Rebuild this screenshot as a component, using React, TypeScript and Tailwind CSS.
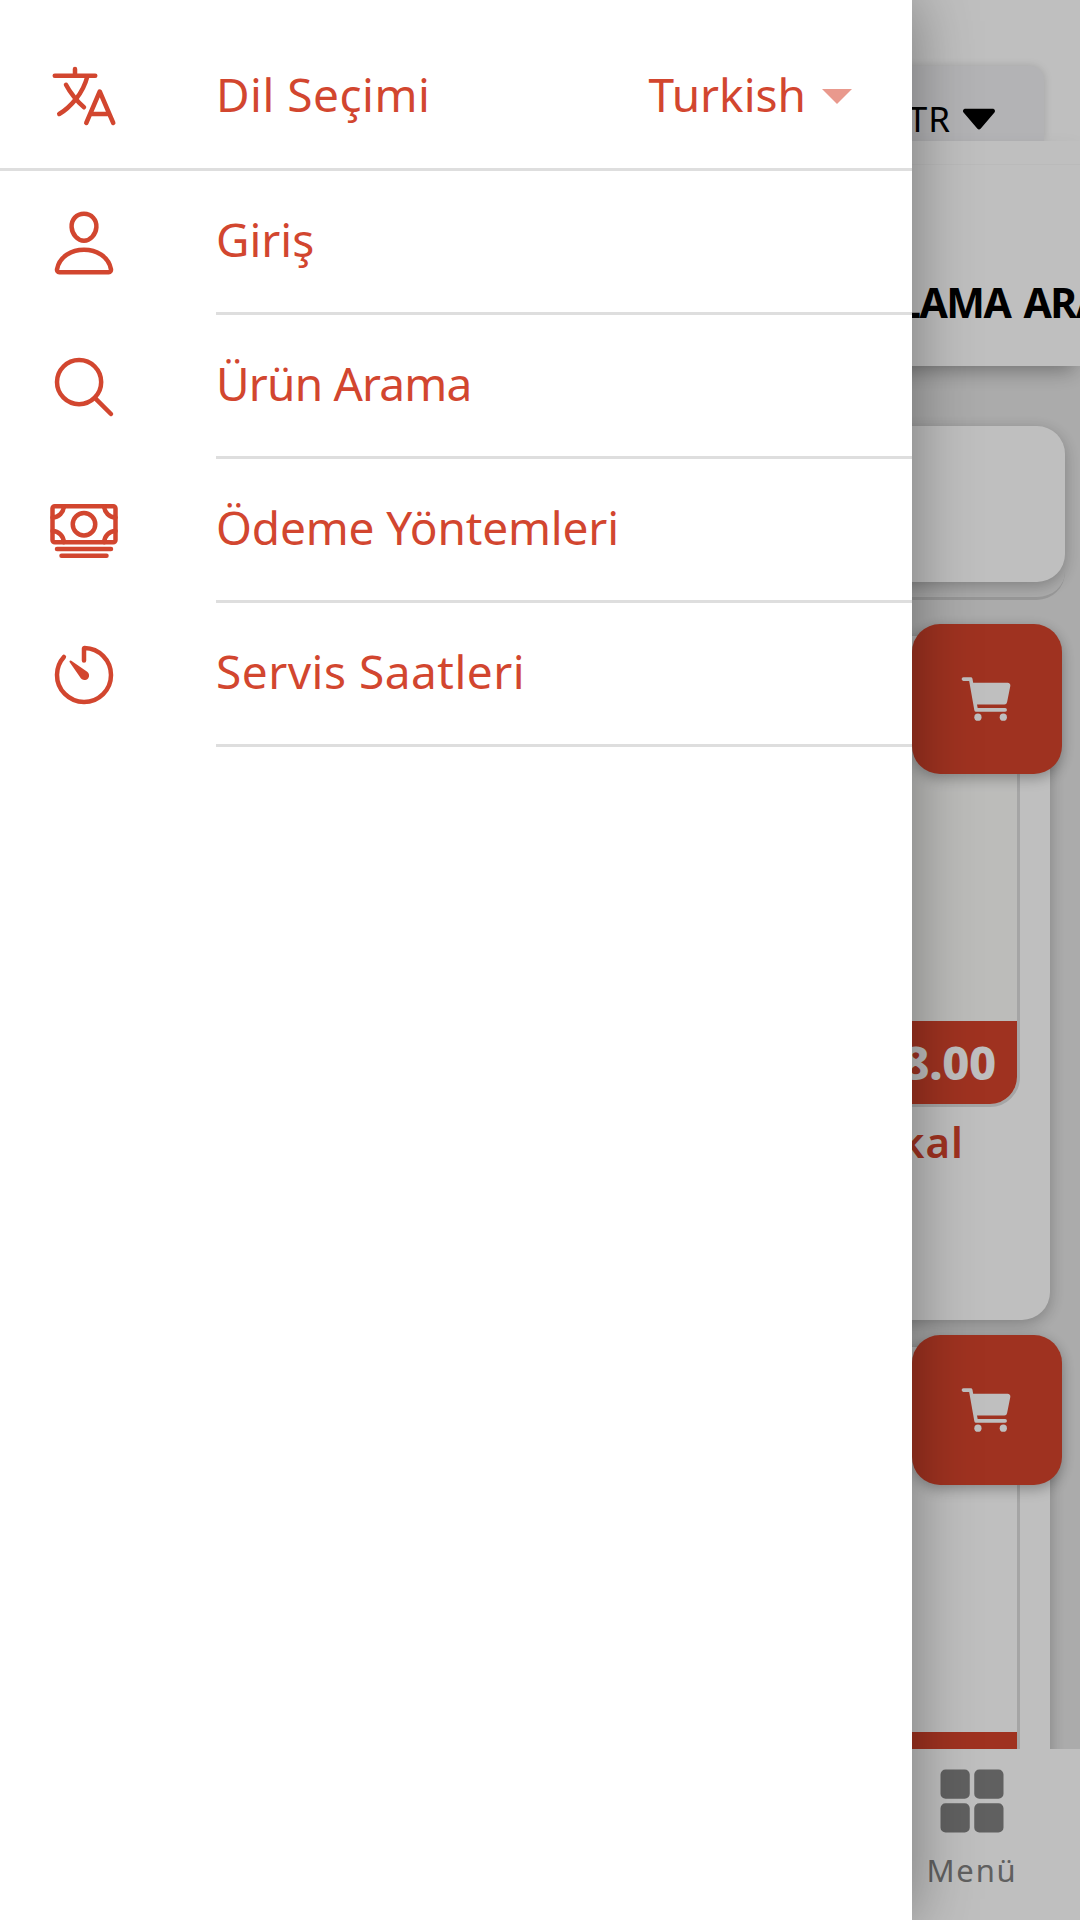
import type { ReactNode } from "react";
import {
    IoCaretDown,
    IoCart,
    IoCashOutline,
    IoGrid,
    IoLanguageOutline,
    IoPersonOutline,
    IoSearchOutline,
    IoTimerOutline,
} from "react-icons/io5";

type MenuRowProps = {
    icon: ReactNode;
    label: string;
    tracking: string;
};

type ProductCardProps = {
    name?: string;
    price?: string;
    imageClass: string;
};

const menuRows: MenuRowProps[] = [
    { icon: <IoPersonOutline />, label: "Giriş", tracking: "tracking-[0px]" },
    { icon: <IoSearchOutline />, label: "Ürün Arama", tracking: "tracking-[-0.8px]" },
    { icon: <IoCashOutline />, label: "Ödeme Yöntemleri", tracking: "tracking-[-0.15px]" },
    { icon: <IoTimerOutline />, label: "Servis Saatleri", tracking: "tracking-[0.5px]" },
];

function MenuRow({ icon, label, tracking }: MenuRowProps) {
    return (
        <li className="flex h-36 pl-12">
            <span className="flex w-[168px] items-center text-[72px]">{icon}</span>
            <span className="flex flex-1 items-center border-b-[3px] border-[#dedede] pb-1">
                <span className={tracking}>{label}</span>
            </span>
        </li>
    );
}

function LanguageRow() {
    return (
        <div className="flex h-[171px] items-center border-b-[3px] border-[#dedede] pt-6 pl-12">
            <IoLanguageOutline className="text-[72px]" />
            <span className="ml-24 flex-1 pb-[3px] tracking-[0.5px]">Dil Seçimi</span>
            <button className="mr-[60px] flex items-center gap-4">
                <span className="pb-[3px]">Turkish</span>
                <svg className="h-[15px] w-[30px] fill-[#e9998d]" viewBox="0 0 30 15">
                    <path d="M0 0h30L15 15z" />
                </svg>
            </button>
        </div>
    );
}

function SideMenu() {
    return (
        <nav className="absolute inset-y-0 left-0 w-[912px] bg-white text-[46px] text-[#d2462f] shadow-[0_0_60px_rgba(0,0,0,0.38)]">
            <LanguageRow />
            <ul>
                {menuRows.map((row) => (
                    <MenuRow key={row.label} {...row} />
                ))}
            </ul>
        </nav>
    );
}

function ProductCard({ name, price, imageClass }: ProductCardProps) {
    return (
        <article className="relative mx-[30px] h-[684px] shrink-0 rounded-[28px] bg-white px-[30px] pt-[30px] shadow-[0_4px_16px_rgba(0,0,0,0.25)]">
            <div className="flex h-[441px] flex-col justify-end overflow-hidden rounded-[30px] border-[3px] border-[#dcdcdc]">
                <div className={`flex-1 ${imageClass}`} />
                <div className="flex h-[83px] items-center justify-end bg-[#d4432b] pr-[21px] text-[47px] font-extrabold tracking-[-0.3px] text-white">
                    {price}
                </div>
            </div>
            {name && (
                <h3 className="mt-[5px] pr-[56px] text-right text-[42px] leading-[60px] font-semibold tracking-[1px] text-[#d4432b]">
                    {name}
                </h3>
            )}
            <button className="absolute -top-3 -right-3 flex size-[150px] items-center justify-center rounded-[28px] bg-[#d4432b] text-[58px] text-white shadow-[0_4px_14px_rgba(0,0,0,0.3)]">
                <IoCart />
            </button>
        </article>
    );
}

export default function App() {
    return (
        <div className="relative h-[1920px] w-[1080px] overflow-hidden bg-[#e5e5e5] font-['Noto_Sans',sans-serif]">
            <div className="flex h-full flex-col">
                <div className="flex h-[141px] shrink-0 items-end justify-end bg-white pr-9">
                    <div className="flex h-[75px] w-[240px] items-center justify-end gap-[7px] rounded-tr-[14px] bg-[#efeff2] pt-[30px] pr-[44px] text-[35px] leading-none tracking-[1px] text-black shadow-[0_0_8px_rgba(0,0,0,0.15)]">
                        TR
                        <IoCaretDown className="-mx-1 text-[50px]" />
                    </div>
                </div>
                <header className="z-10 flex h-[225px] shrink-0 flex-col bg-white shadow-[0_10px_20px_-6px_rgba(0,0,0,0.35)]">
                    <div className="h-6 border-b border-[#f9f9f9]" />
                    <div className="flex flex-1 items-center pt-[74px] pl-[898px] text-[41px] leading-none font-bold tracking-[-1.5px] [word-spacing:4px] whitespace-nowrap text-black">
                        LAMA ARA
                    </div>
                </header>
                <main className="flex h-[1383px] shrink-0 flex-col overflow-hidden pt-[60px]">
                    <div className="mr-[15px] mb-9 h-[174px] shrink-0 rounded-[28px] border-b-[3px] border-[#cbcbcb]">
                        <div className="h-[156px] rounded-[28px] bg-white shadow-[0_4px_16px_rgba(0,0,0,0.25)]" />
                    </div>
                    <div className="flex flex-col gap-[27px]">
                        <ProductCard name="kal" price="8.00" imageClass="bg-[#fbfbf9]" />
                        <ProductCard imageClass="bg-white" />
                    </div>
                </main>
                <footer className="flex flex-1 justify-end bg-white pr-[8px]">
                    <div className="flex w-[200px] flex-col items-center pt-4 text-[#808080]">
                        <IoGrid className="text-[72px]" />
                        <span className="mt-[13px] text-[31px] leading-[40px] tracking-[1.8px]">Menü</span>
                    </div>
                </footer>
            </div>
            <div className="absolute inset-0 z-20 bg-black/25">
                <SideMenu />
            </div>
        </div>
    );
}
